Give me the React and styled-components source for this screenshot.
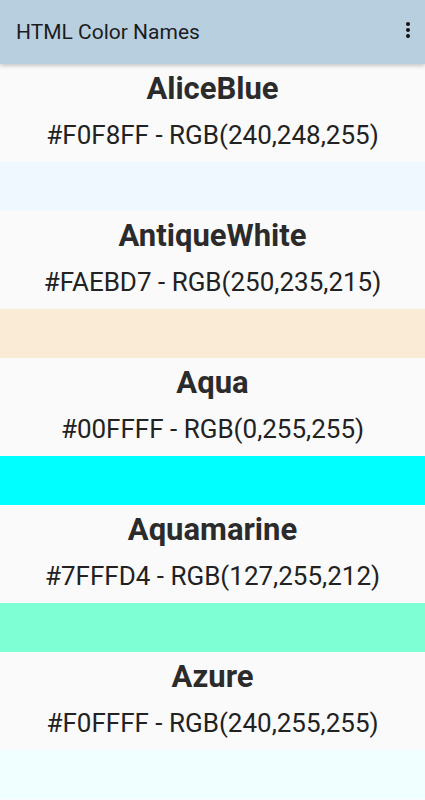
import styled, { createGlobalStyle } from "styled-components";

const colors = [
    { name: "AliceBlue", hex: "#F0F8FF", rgb: "240,248,255" },
    { name: "AntiqueWhite", hex: "#FAEBD7", rgb: "250,235,215" },
    { name: "Aqua", hex: "#00FFFF", rgb: "0,255,255" },
    { name: "Aquamarine", hex: "#7FFFD4", rgb: "127,255,212" },
    { name: "Azure", hex: "#F0FFFF", rgb: "240,255,255" },
];

function App(){
    return(
        <>
            <GlobalStyle />
            <StyledPage>
                <StyledAppBar>
                    <StyledTitle>HTML Color Names</StyledTitle>
                    <StyledMenu aria-label="menu">
                        <span /><span /><span />
                    </StyledMenu>
                </StyledAppBar>
                <StyledList>
                    {colors.map((c) => (
                        <StyledItem key={c.name}>
                            <StyledInfo>
                                <StyledName>{c.name}</StyledName>
                                <StyledCode>{c.hex} - RGB({c.rgb})</StyledCode>
                            </StyledInfo>
                            <StyledSwatch $color={c.hex} />
                        </StyledItem>
                    ))}
                </StyledList>
            </StyledPage>
        </>
    );
}

const GlobalStyle = createGlobalStyle`
    body {
        margin: 0;
        background: #fafafa;
        font-family: Roboto, "Noto Sans", sans-serif;
    }
`

const StyledPage = styled.div`
    width: 425px;
    height: 800px;
    overflow: hidden;
    display: flex;
    flex-direction: column;
    background: #fafafa;
`

const StyledAppBar = styled.header`
    height: 64px;
    flex-shrink: 0;
    display: flex;
    align-items: center;
    justify-content: space-between;
    padding: 0 16px;
    background-color: #b8cfe0;
    box-shadow: 0 2px 4px rgba(0,0,0,0.2);
    position: relative;
    z-index: 1;
`

const StyledTitle = styled.h1`
    margin: 0;
    font-size: 21px;
    font-weight: 400;
    color: #1c1c1c;
`

const StyledMenu = styled.button`
    border: none;
    background: none;
    padding: 0;
    margin-right: -3px;
    width: 8px;
    display: flex;
    flex-direction: column;
    align-items: center;
    gap: 2px;
    margin-top: -4px;
    span {
        width: 4px;
        height: 4px;
        border-radius: 50%;
        background: #111;
    }
`

const StyledList = styled.main`
    display: flex;
    flex-direction: column;
`

const StyledItem = styled.section`
    display: flex;
    flex-direction: column;
`

const StyledInfo = styled.div`
    height: 98px;
    display: flex;
    flex-direction: column;
    align-items: center;
    background: #fafafa;
    color: #2b2b2b;
`

const StyledName = styled.h2`
    margin: 7px 0 0;
    font-size: 31px;
    line-height: 36px;
    font-weight: 700;
`

const StyledCode = styled.p`
    margin: 13px 0 0;
    font-size: 26px;
    line-height: 30px;
    color: #222;
`

const StyledSwatch = styled.div`
    height: 49px;
    background-color: ${(p) => p.$color};
`

export default App;
